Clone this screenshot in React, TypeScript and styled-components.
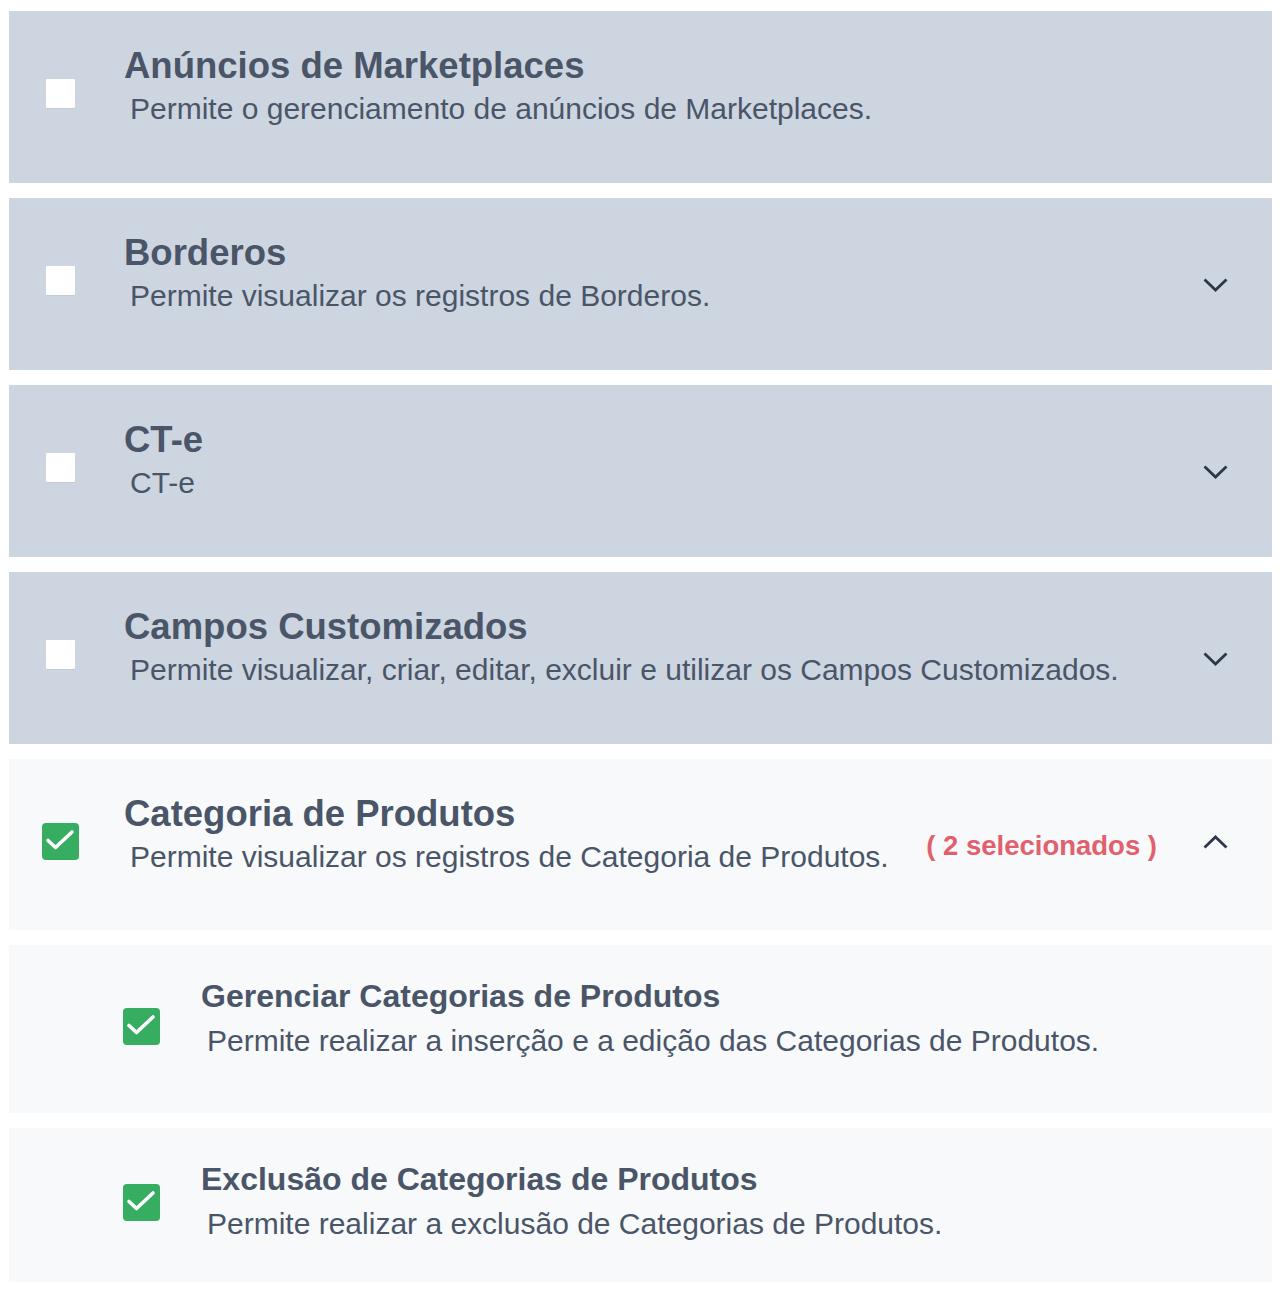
import styled, { createGlobalStyle } from "styled-components";

const GlobalStyle = createGlobalStyle`
  body {
    margin: 0;
    background: #fff;
    font-family: "Liberation Sans", Arial, sans-serif;
  }
`;

const List = styled.div`
  display: flex;
  flex-direction: column;
  gap: 15px;
  padding: 11px 8px 8px 9px;
`;

const Card = styled.div<{ open?: boolean; sub?: boolean; h: number }>`
  display: flex;
  align-items: center;
  min-height: ${({ h }) => h}px;
  box-sizing: border-box;
  padding: ${({ sub }) => (sub ? "0 44px 0 114px" : "0 44px 0 33px")};
  background: ${({ open, sub }) => (open || sub ? "#f7f9fb" : "#cdd5e0")};
`;

const CheckSlot = styled.div<{ sub?: boolean }>`
  width: 37px;
  height: 37px;
  flex-shrink: 0;
  display: flex;
  align-items: center;
  justify-content: center;
  margin-bottom: ${({ sub }) => (sub ? "6px" : "7px")};
`;

const EmptyBox = styled.div`
  width: 29px;
  height: 29px;
  background: #fff;
  border-radius: 1px;
  box-shadow: 0 1px 0 #c2cad6;
`;

const CheckedBox = styled.div`
  width: 37px;
  height: 37px;
  border-radius: 4px;
  background: #36ad60;
  display: flex;
  align-items: center;
  justify-content: center;
`;

const Texts = styled.div<{ sub?: boolean }>`
  flex: 1;
  align-self: flex-start;
  margin-left: ${({ sub }) => (sub ? "41px" : "45px")};
  padding-top: ${({ sub }) => (sub ? "32px" : "35px")};
  min-width: 0;
`;

const Title = styled.div<{ sub?: boolean }>`
  font-size: ${({ sub }) => (sub ? "32px" : "36.5px")};
  line-height: ${({ sub }) => (sub ? "38px" : "40px")};
  font-weight: 700;
  color: #4a5568;
`;

const Desc = styled.div<{ sub?: boolean }>`
  margin-top: ${({ sub }) => (sub ? "8px" : "5px")};
  padding-left: 6px;
  font-size: 30px;
  line-height: 36px;
  color: #4a5568;
`;

const Side = styled.div`
  display: flex;
  align-items: center;
  gap: 46px;
`;

const Selected = styled.span`
  font-size: 27.5px;
  font-weight: 700;
  color: #e2606d;
  margin-top: 3px;
`;

const Chevron = styled.svg<{ up?: boolean }>`
  width: 25px;
  height: 14px;
  display: block;
  margin-top: ${({ up }) => (up ? "-5px" : "2px")};
`;

function Check() {
  return (
    <CheckedBox>
      <svg width="37" height="37" viewBox="0 0 37 37">
        <polyline
          points="6,17.5 13.5,24.5 30,9"
          fill="none"
          stroke="#fff"
          strokeWidth="3.6"
          strokeLinecap="round"
          strokeLinejoin="round"
        />
      </svg>
    </CheckedBox>
  );
}

function Arrow({ up }: { up?: boolean }) {
  return (
    <Chevron up={up} viewBox="0 0 25 14">
      <polyline
        points={up ? "1.5,12.5 12.5,2 23.5,12.5" : "1.5,1.5 12.5,12 23.5,1.5"}
        fill="none"
        stroke="#2d3748"
        strokeWidth="2.8"
      />
    </Chevron>
  );
}

type Item = {
  title: string;
  desc: string;
  checked?: boolean;
  open?: boolean;
  expandable?: boolean;
  count?: number;
  sub?: boolean;
  h: number;
};

const items: Item[] = [
  {
    title: "Anúncios de Marketplaces",
    desc: "Permite o gerenciamento de anúncios de Marketplaces.",
    h: 172,
  },
  {
    title: "Borderos",
    desc: "Permite visualizar os registros de Borderos.",
    expandable: true,
    h: 172,
  },
  { title: "CT-e", desc: "CT-e", expandable: true, h: 172 },
  {
    title: "Campos Customizados",
    desc: "Permite visualizar, criar, editar, excluir e utilizar os Campos Customizados.",
    expandable: true,
    h: 172,
  },
  {
    title: "Categoria de Produtos",
    desc: "Permite visualizar os registros de Categoria de Produtos.",
    checked: true,
    open: true,
    expandable: true,
    count: 2,
    h: 171,
  },
  {
    title: "Gerenciar Categorias de Produtos",
    desc: "Permite realizar a inserção e a edição das Categorias de Produtos.",
    checked: true,
    sub: true,
    h: 168,
  },
  {
    title: "Exclusão de Categorias de Produtos",
    desc: "Permite realizar a exclusão de Categorias de Produtos.",
    checked: true,
    sub: true,
    h: 154,
  },
];

export default function App() {
  return (
    <>
      <GlobalStyle />
      <List>
        {items.map((it) => (
          <Card key={it.title} open={it.open} sub={it.sub} h={it.h}>
            <CheckSlot sub={it.sub}>{it.checked ? <Check /> : <EmptyBox />}</CheckSlot>
            <Texts sub={it.sub}>
              <Title sub={it.sub}>{it.title}</Title>
              <Desc sub={it.sub}>{it.desc}</Desc>
            </Texts>
            {it.expandable && (
              <Side>
                {it.count ? <Selected>( {it.count} selecionados )</Selected> : null}
                <Arrow up={it.open} />
              </Side>
            )}
          </Card>
        ))}
      </List>
    </>
  );
}
